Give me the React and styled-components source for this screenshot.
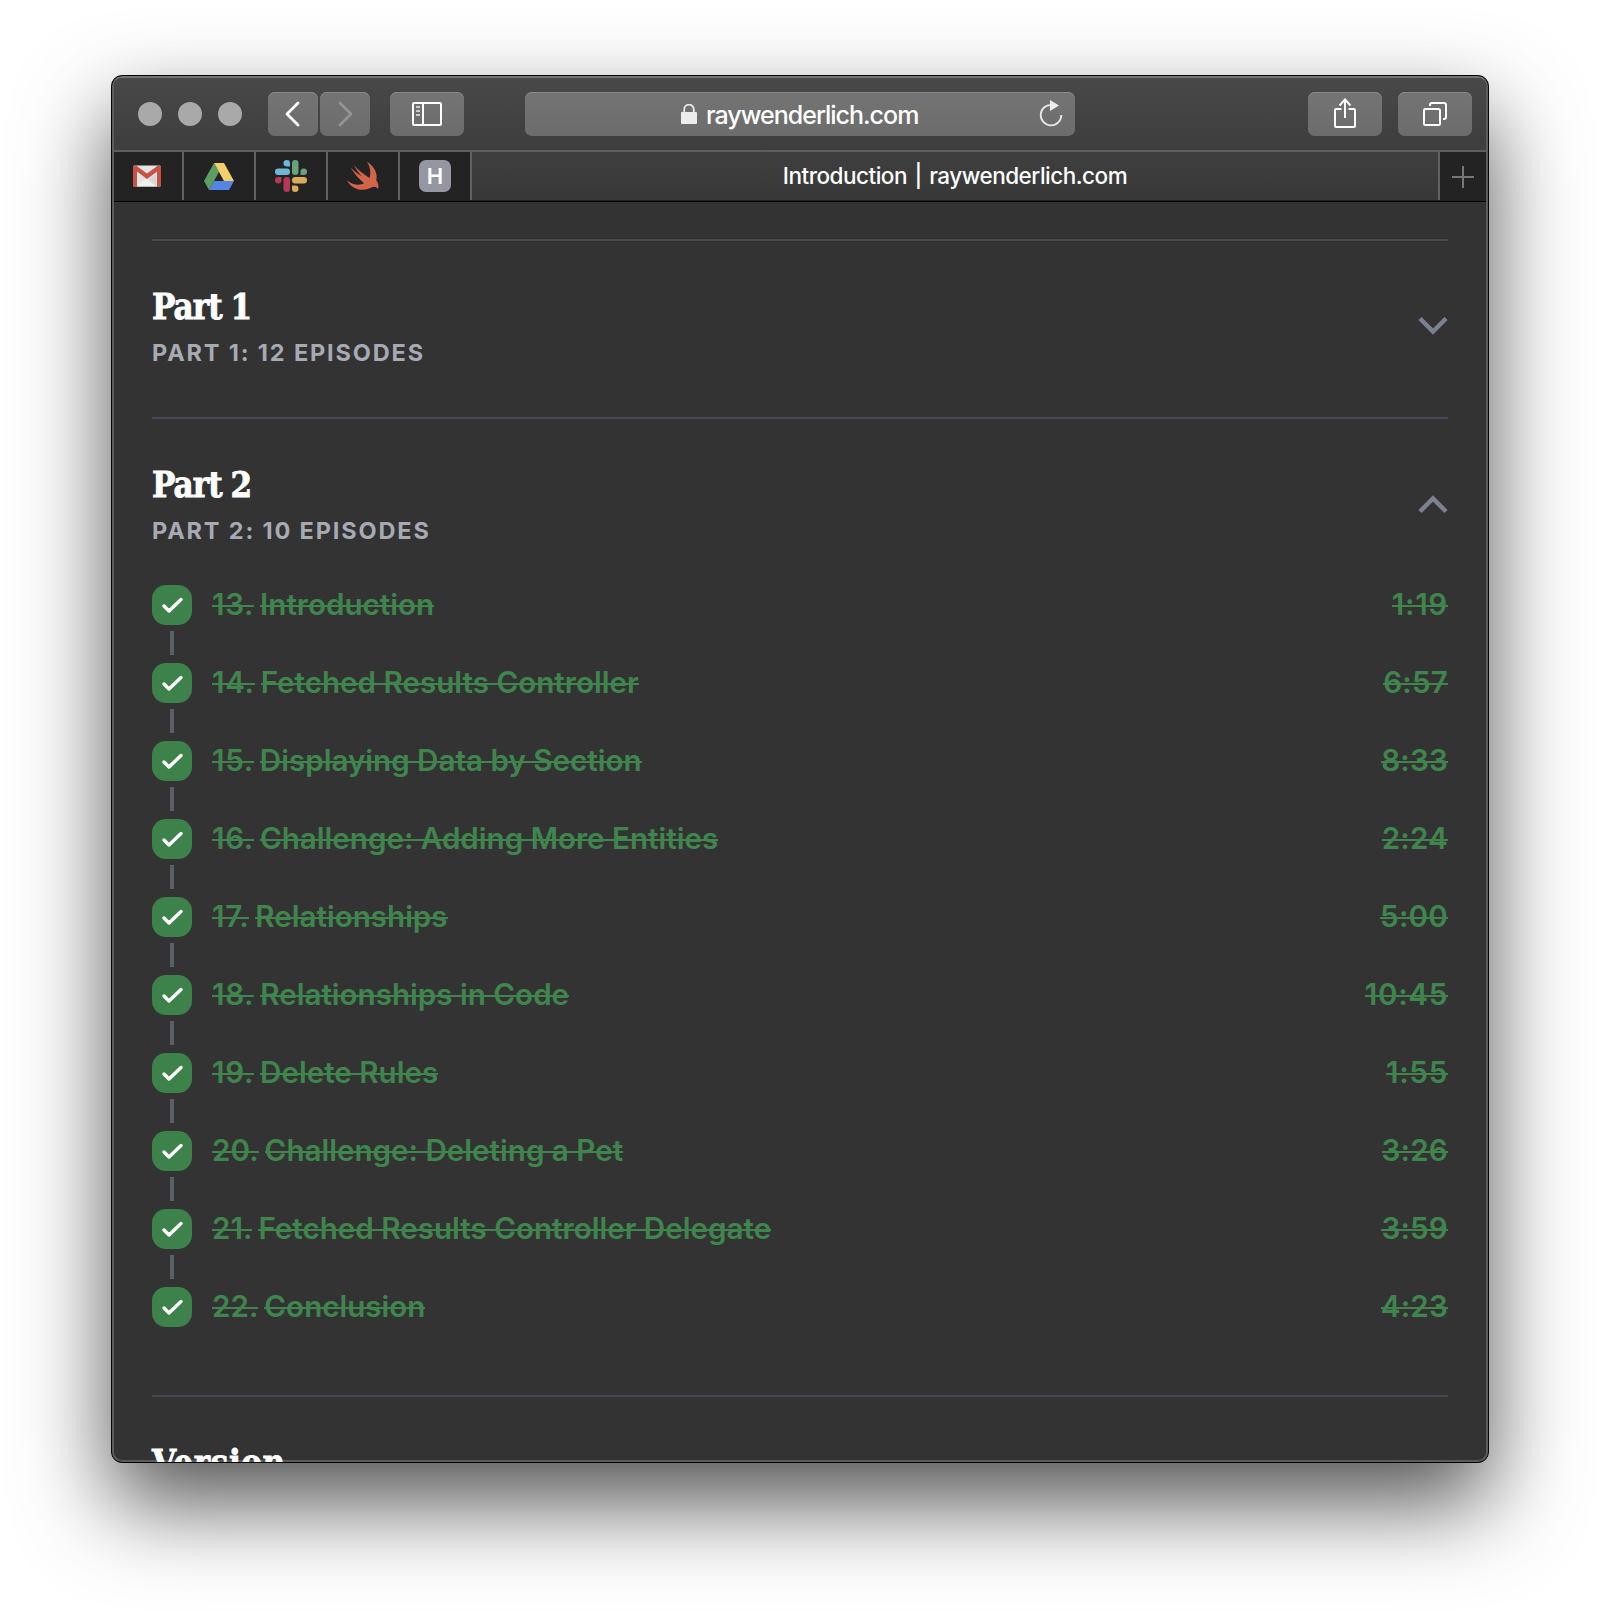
import React from "react";
import styled, { createGlobalStyle, css } from "styled-components";

const Global = createGlobalStyle`
  * { box-sizing: border-box; }
  body { margin: 0; background: #fff; font-family: Inter, "Liberation Sans", sans-serif; -webkit-font-smoothing: antialiased; }
`;

const Desktop = styled.main`
  width: 1600px;
  height: 1610px;
  padding: 75px 111px 147px;
  overflow: hidden;
  background: #fff;
`;

const Window = styled.section`
  width: 1378px;
  height: 1388px;
  border: 1px solid #050505;
  border-radius: 11px;
  overflow: hidden;
  background: #333;
  box-shadow: 0 40px 90px rgba(0, 0, 0, 0.68);
`;

const Frame = styled.div`
  height: 100%;
  display: flex;
  flex-direction: column;
  border: 2px solid #5c5c5c;
  border-top-color: #747474;
  border-radius: 10px;
`;

const Toolbar = styled.header`
  height: 72px;
  flex: none;
  display: flex;
  align-items: flex-start;
  padding: 14px 14px 0 24px;
  border-radius: 8px 8px 0 0;
  background: linear-gradient(#484848, #3e3e3e);
`;

const Lights = styled.div`
  display: flex;
  gap: 16px;
  margin: 10px 26px 0 0;
`;

const Light = styled.i`
  width: 24px;
  height: 24px;
  border-radius: 50%;
  background: #a9a9a9;
`;

const surface = css`
  height: 44px;
  border: 0;
  border-radius: 7px;
  background: linear-gradient(#747474, #6c6c6c);
  box-shadow: inset 0 1px 0 #8a8a8a;
`;

const Button = styled.button`
  ${surface}
  width: ${(p) => p.$w}px;
  margin-right: ${(p) => p.$after || 0}px;
  padding: 0;
  display: flex;
  align-items: center;
  justify-content: center;
`;

const Address = styled.div`
  ${surface}
  width: 550px;
  margin-right: 233px;
  padding: 0 12px 0 156px;
  display: flex;
  align-items: center;
  color: #fff;
`;

const Host = styled.span`
  flex: 1;
  margin-left: 9px;
  padding-top: 2px;
  font-size: 25px;
  font-weight: 450;
  line-height: 42px;
  letter-spacing: -1px;
`;

const TabBar = styled.nav`
  height: 52px;
  flex: none;
  display: flex;
  border-top: 2px solid #5e5e5e;
  border-bottom: 1px solid #000;
  padding-bottom: 1px;
  background: #232323;
`;

const Pinned = styled.div`
  width: ${(p) => p.$w || 72}px;
  padding-right: ${(p) => (p.$w ? 2 : 0)}px;
  border-right: 2px solid #616161;
  display: flex;
  align-items: center;
  justify-content: center;
`;

const ActiveTab = styled.div`
  flex: 1;
  padding-top: 1px;
  border-right: 2px solid #616161;
  background: linear-gradient(#3f3f3f, #383838);
  color: #fff;
  font-size: 22.5px;
  font-weight: 500;
  line-height: 46px;
  letter-spacing: -0.5px;
  word-spacing: 2px;
  text-align: center;
`;

const NewTab = styled.div`
  width: 46px;
  padding-top: 1px;
  display: flex;
  align-items: center;
  justify-content: center;
`;

const Initial = styled.div`
  width: 32px;
  height: 32px;
  border-radius: 7px;
  background: #9496a1;
  color: #fff;
  font-size: 22px;
  font-weight: 600;
  line-height: 33px;
  text-align: center;
`;

const Page = styled.div`
  flex: 1;
  min-height: 0;
  padding: 37px 38px 0;
`;

const Part = styled.section`
  border-top: 2px solid #474a54;
  height: ${(p) => p.$h}px;
`;

const PartHeader = styled.div`
  display: flex;
  justify-content: space-between;
  align-items: flex-start;
  padding-top: 42px;
  height: 166px;
`;

const Title = styled.h2`
  margin: 1px 0 0;
  color: #fff;
  font-family: "DejaVu Serif Condensed", "DejaVu Serif", serif;
  font-stretch: condensed;
  font-size: 34.5px;
  font-weight: 700;
  line-height: 46px;
  letter-spacing: ${(p) => p.$ls ?? -0.9}px;
  word-spacing: -1px;
  -webkit-text-stroke: 0.8px #fff;
`;

const Subtitle = styled.p`
  margin: 7px 0 0;
  color: #a6aab3;
  font-size: 23.5px;
  font-weight: 650;
  line-height: 32px;
  letter-spacing: 1.85px;
`;

const Chevron = styled.svg`
  margin-top: 32px;
`;

const Episodes = styled.ol`
  list-style: none;
  margin: 0;
  padding: 0;
`;

const Episode = styled.li`
  display: flex;
  height: 78px;
  color: #3f854d;
  font-size: 29.6px;
  font-weight: 560;
  line-height: 38px;
`;

const Progress = styled.div`
  width: 40px;
  margin-right: 20px;
  display: flex;
  flex-direction: column;
  align-items: center;
  gap: 6px;
`;

const Check = styled.div`
  width: 40px;
  height: 40px;
  border-radius: 14px;
  background: #3d824b;
`;

const Connector = styled.i`
  width: 4px;
  height: 24px;
  background: #5b5f69;
`;

const Struck = styled.span`
  height: 40px;
  margin-right: ${(p) => p.$after || 0}px;
  letter-spacing: ${(p) => p.$ls || 0}px;
  background: linear-gradient(#3f854d, #3f854d) 0 20px / 100% 2px no-repeat;
`;

const Spacer = styled.div`
  flex: 1;
`;

const episodes = [
  ["13.", "Introduction", "1:19"],
  ["14.", "Fetched Results Controller", "6:57"],
  ["15.", "Displaying Data by Section", "8:33"],
  ["16.", "Challenge: Adding More Entities", "2:24"],
  ["17.", "Relationships", "5:00"],
  ["18.", "Relationships in Code", "10:45"],
  ["19.", "Delete Rules", "1:55"],
  ["20.", "Challenge: Deleting a Pet", "3:26"],
  ["21.", "Fetched Results Controller Delegate", "3:59"],
  ["22.", "Conclusion", "4:23"],
];

const line = { fill: "none", stroke: "#fff", strokeWidth: 2 };

function Arrow({ dim, d }) {
  return (
    <svg width="20" height="28" viewBox="0 0 20 28">
      <path d={d} fill="none" stroke={dim ? "#949494" : "#fff"} strokeWidth="2.8" strokeLinecap="round" strokeLinejoin="round" />
    </svg>
  );
}

function Gmail() {
  return (
    <svg width="28" height="22" viewBox="0 0 28 22">
      <rect width="28" height="21" y=".5" rx="1.5" fill="#e4e4e4" />
      <path d="M4 21.5 14 12l10 9.5z" fill="#f1f1f1" />
      <path d="M5 9l9 6 9-6v12.5L14 14z" fill="#cfcfcf" opacity=".6" />
      <path d="M0 2v18q0 1.500 1.500 1.500H4V6.500l10 7.500 10-7.500v15h2.500q1.500 0 1.500-1.500V2Q28 .5 26.500.5H25L14 8.500 3 .5H1.500Q0 .5 0 2z" fill="#c65343" />
    </svg>
  );
}

function Drive() {
  return (
    <svg width="30" height="27" viewBox="0 0 30 27">
      <path d="M10 0 0 18l5 9 10-18z" fill="#5b9e62" />
      <path d="M10 0h10l10 18H20z" fill="#f3ce6a" />
      <path d="M10 18h20l-5 9H5z" fill="#5485e4" />
    </svg>
  );
}

function Slack() {
  return (
    <svg width="32" height="32" viewBox="0 0 32 32">
      <g fill="#70b6d8">
        <rect x="0" y="8.500" width="15" height="6.500" rx="3.250" />
        <path d="M15 6.500h-3.200A3.250 3.250 0 1 1 15 3.250z" />
      </g>
      <g fill="#66a37c">
        <rect x="17" y="0" width="6.500" height="15" rx="3.250" />
        <path d="M25.500 15v-3.200A3.250 3.250 0 1 1 28.750 15z" />
      </g>
      <g fill="#d9ad58">
        <rect x="17" y="17" width="15" height="6.500" rx="3.250" />
        <path d="M17 25.500h3.200A3.250 3.250 0 1 1 17 28.750z" />
      </g>
      <g fill="#b23a58">
        <rect x="8.500" y="17" width="6.500" height="15" rx="3.250" />
        <path d="M6.500 17v3.200A3.250 3.250 0 1 1 3.250 17z" />
      </g>
    </svg>
  );
}

function Swift() {
  return (
    <svg width="34" height="30" viewBox="0 0 34 30">
      <path fill="#d2644a" d="M21 .8c7.500 4.700 11 12 9.200 18.500 2.800 3.500 2.500 7 1.700 8.700-1.700-2.800-4.300-2.700-6.500-1.600C17.500 30.500 6.500 29.500 1 19.400c5.300 4.100 12.300 5.700 17 2.900C13 18.200 8 12 4.600 6.500c4 3.700 8 7 11.300 9C12.800 11.800 9.700 7.700 7.600 4c4.900 4.900 10.700 9.800 15.900 13.100C25 12.300 24.500 6.200 21 .8z" />
    </svg>
  );
}

function PartChevron({ up }) {
  return (
    <Chevron width="30" height="21" viewBox="0 0 30 21">
      <path d={up ? "M2 18.500 15 5.500 28 18.500" : "M2 3.500 15 16.500 28 3.500"} fill="none" stroke="#7b8190" strokeWidth="4.500" />
    </Chevron>
  );
}

export default function App() {
  return (
    <Desktop>
      <Global />
      <Window>
        <Frame>
          <Toolbar>
            <Lights><Light /><Light /><Light /></Lights>
            <Button $w={50} $after={2} aria-label="Back"><Arrow d="M15 3 4 14l11 11" /></Button>
            <Button $w={50} $after={20} aria-label="Forward"><Arrow dim d="M5 3l11 11L5 25" /></Button>
            <Button $w={74} $after={61} aria-label="Sidebar">
              <svg width="30" height="24" viewBox="0 0 30 24" {...line}>
                <rect x="1" y="1" width="28" height="22" rx="1" />
                <path d="M11 1v22" />
                <path d="M4 5h4M4 9h4M4 13h4" stroke="#ccc" />
              </svg>
            </Button>
            <Address>
              <svg width="16" height="20" viewBox="0 0 16 20">
                <path d="M3.200 9V5.500a4.800 4.800 0 0 1 9.600 0V9" fill="none" stroke="#ececec" strokeWidth="1.800" />
                <rect y="8" width="16" height="12" rx="1" fill="#ececec" />
              </svg>
              <Host>raywenderlich.com</Host>
              <svg width="24" height="28" viewBox="0 0 24 28">
                <path d="M12.500 4.800A10.300 10.300 0 1 0 22.300 15" fill="none" stroke="#e8e8e8" strokeWidth="1.800" />
                <path d="M11 0 20 5.500l-9 5.500z" fill="#ececec" />
              </svg>
            </Address>
            <Button $w={74} $after={16} aria-label="Share">
              <svg width="24" height="32" viewBox="0 0 24 32" {...line}>
                <path d="M8.500 11H3q-1 0-1 1v16q0 1 1 1h18q1 0 1-1V12q0-1-1-1h-5.500M12 20V2M6.500 7.500 12 1.500l5.500 6" />
              </svg>
            </Button>
            <Button $w={74} aria-label="Tabs">
              <svg width="24" height="24" viewBox="0 0 24 24" {...line}>
                <rect x="1" y="7" width="16" height="16" rx="1.5" />
                <path d="M7 4V3q0-2 2-2h12q2 0 2 2v12q0 2-2 2h-1" />
              </svg>
            </Button>
          </Toolbar>
          <TabBar>
            <Pinned $w={70}><Gmail /></Pinned>
            <Pinned><Drive /></Pinned>
            <Pinned><Slack /></Pinned>
            <Pinned><Swift /></Pinned>
            <Pinned><Initial>H</Initial></Pinned>
            <ActiveTab>Introduction | raywenderlich.com</ActiveTab>
            <NewTab>
              <svg width="22" height="22" viewBox="0 0 22 22"><path d="M11 0v22M0 11h22" stroke="#777" strokeWidth="2" /></svg>
            </NewTab>
          </TabBar>
          <Page>
            <Part $h={178}>
              <PartHeader>
                <div><Title>Part 1</Title><Subtitle>PART 1: 12 EPISODES</Subtitle></div>
                <PartChevron />
              </PartHeader>
            </Part>
            <Part $h={978}>
              <PartHeader>
                <div><Title>Part 2</Title><Subtitle>PART 2: 10 EPISODES</Subtitle></div>
                <PartChevron up />
              </PartHeader>
              <Episodes>
                {episodes.map(([n, title, time], i) => (
                  <Episode key={n}>
                    <Progress>
                      <Check>
                        <svg width="40" height="40" viewBox="0 0 40 40">
                          <path d="M12 21l5 5L29 14.500" fill="none" stroke="#fff" strokeWidth="3.400" strokeLinecap="round" strokeLinejoin="round" />
                        </svg>
                      </Check>
                      {i < episodes.length - 1 && <Connector />}
                    </Progress>
                    <Struck $after={6} $ls={n[0] === "1" ? 0.65 : 0}>{n}</Struck>
                    <Struck>{title}</Struck>
                    <Spacer />
                    <Struck $ls={time[0] === "1" ? 0.7 : 0.2}>{time}</Struck>
                  </Episode>
                ))}
              </Episodes>
            </Part>
            <Part $h={100}>
              <PartHeader><Title $ls={0.6}>Version</Title></PartHeader>
            </Part>
          </Page>
        </Frame>
      </Window>
    </Desktop>
  );
}
